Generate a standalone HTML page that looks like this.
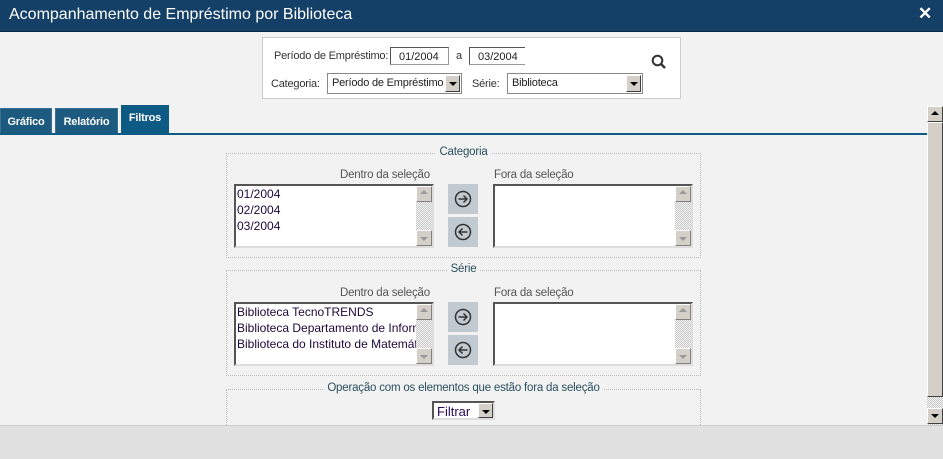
<!DOCTYPE html>
<html><head><meta charset="utf-8"><style>
*{box-sizing:border-box;margin:0;padding:0}
body{width:943px;height:459px;overflow:hidden;background:#f2f2f2;font-family:"Liberation Sans",sans-serif;position:relative}
.a{position:absolute}
.t{font-size:11px;color:#333;white-space:nowrap;letter-spacing:-0.2px}
.inp{background:#fff;border:1px solid #999;border-top-color:#555;border-left-color:#555;font-size:11px;color:#222;padding:3px 0 0 8px;white-space:nowrap;overflow:hidden}
.sel{background:#fff;border:1px solid #888;font-size:11px;color:#222;padding:3px 0 0 4px;white-space:nowrap;overflow:hidden;letter-spacing:-0.2px}
.dd{position:absolute;right:1px;top:1px;width:15px;bottom:1px;background:#d4d0c8;border:1px solid;border-color:#fff #404040 #404040 #fff}
.dd:after{content:"";position:absolute;left:3px;top:6px;border:4px solid transparent;border-top:4px solid #000;border-bottom:0}
.fs{position:absolute;border:1px dotted #bbb}
.lg{position:absolute;top:-8px;left:0;right:0;text-align:center;font-size:11.5px;color:#2a4f5e;white-space:nowrap;letter-spacing:-0.2px}
.lg span{background:#f2f2f2;padding:0 3px}
.lb{position:absolute;background:#fff;border:2px solid;border-color:#555 #ddd #ddd #555;font-size:12px;color:#1a0a3a;line-height:16px;padding-left:1px;overflow:hidden;white-space:nowrap}
.sb{position:absolute;right:0;top:0;bottom:0;width:16px;background:repeating-conic-gradient(#c8c8c8 0 25%,#f4f4f4 0 50%) 0 0/2px 2px}
.sbb{position:absolute;left:0;width:16px;height:16px;background:#d4d0c8;border:1px solid;border-color:#fff #808080 #808080 #fff}
.up:after,.dn:after{content:"";position:absolute;left:3px;border:4px solid transparent}
.up:after{top:3px;border-bottom:4px solid #999;border-top:0}
.dn:after{top:6px;border-top:4px solid #999;border-bottom:0}
.btn{position:absolute;width:30px;height:30px;background:#c1c9d1}
.tab{position:absolute;color:#fff;font-size:11px;font-weight:bold;text-align:center;background:#1d5a80;border:1px solid #3a7096;letter-spacing:-0.2px}
</style></head><body>
<div class="a" style="left:0;top:0;width:943px;height:32px;background:#143f66;border-bottom:1px solid #0a2a44"></div>
<div class="a" style="left:9px;top:6px;color:#fff;font-size:16px">Acompanhamento de Empréstimo por Biblioteca</div>
<div class="a" style="left:918px;top:4px;color:#fff;font-size:17px;font-weight:bold">✕</div>

<div class="a" style="left:262px;top:37px;width:419px;height:62px;background:#fff;border:1px solid #ccc"></div>
<div class="a t" style="left:274px;top:50px">Período de Empréstimo:</div>
<div class="a inp" style="left:390px;top:47px;width:59px;height:18px">01/2004</div>
<div class="a t" style="left:456px;top:50px">a</div>
<div class="a inp" style="left:469px;top:47px;width:56px;height:18px;border-right:0">03/2004</div>
<svg class="a" style="left:651px;top:54px" width="16" height="16" viewBox="0 0 16 16"><circle cx="6.5" cy="6.5" r="4.8" fill="none" stroke="#333" stroke-width="2"/><path d="M10 10l4 4" stroke="#333" stroke-width="2.4"/></svg>
<div class="a t" style="left:271px;top:78px">Categoria:</div>
<div class="a sel" style="left:327px;top:73px;width:135px;height:21px">Período de Empréstimo<div class="dd"></div></div>
<div class="a t" style="left:472px;top:78px">Série:</div>
<div class="a sel" style="left:507px;top:73px;width:136px;height:21px">Biblioteca<div class="dd"></div></div>

<div class="tab" style="left:0;top:108px;width:52px;height:26px;padding-top:7px">Gráfico</div>
<div class="tab" style="left:55px;top:108px;width:63px;height:26px;padding-top:7px">Relatório</div>
<div class="tab" style="left:121px;top:105px;width:48px;height:29px;padding-top:6px;background:#0d5a85;border-color:#0d5a85">Filtros</div>
<div class="a" style="left:0;top:133px;width:927px;height:2px;background:#0d5a85"></div>

<div class="a" style="left:927px;top:106px;width:16px;height:319px;background:repeating-conic-gradient(#c8c8c8 0 25%,#f4f4f4 0 50%) 0 0/2px 2px"></div>
<div class="sbb" style="left:927px;top:106px;border-color:#fff #404040 #404040 #fff"><div style="position:absolute;left:3px;top:4px;border:4px solid transparent;border-bottom:4px solid #000;border-top:0"></div></div>
<div class="a" style="left:927px;top:122px;width:16px;height:275px;background:#d4d0c8;border:1px solid;border-color:#fff #404040 #404040 #fff"></div>
<div class="sbb" style="left:927px;top:408px;border-color:#fff #404040 #404040 #fff"><div style="position:absolute;left:3px;top:5px;border:4px solid transparent;border-top:4px solid #000;border-bottom:0"></div></div>
<div class="a" style="left:0;top:425px;width:943px;height:34px;background:#e1e1e1;border-top:1px solid #ccc"></div>

<!-- Categoria -->
<div class="fs" style="left:226px;top:153px;width:475px;height:105px"><div class="lg"><span>Categoria</span></div></div>
<div class="a t" style="left:340px;top:169px;color:#555;font-size:11.5px">Dentro da seleção</div>
<div class="a t" style="left:494px;top:169px;color:#555;font-size:11.5px">Fora da seleção</div>
<div class="lb" style="left:234px;top:184px;width:200px;height:64px">01/2004<br>02/2004<br>03/2004<div class="sb"><div class="sbb up" style="top:0"></div><div class="sbb dn" style="bottom:0"></div></div></div>
<div class="lb" style="left:493px;top:184px;width:200px;height:64px"><div class="sb"><div class="sbb up" style="top:0"></div><div class="sbb dn" style="bottom:0"></div></div></div>
<div class="btn" style="left:448px;top:184px"><svg width="30" height="30"><circle cx="15" cy="15" r="7.5" fill="none" stroke="#333" stroke-width="1.5"/><path d="M10.5 15h8.5M15.5 11.5l3.5 3.5-3.5 3.5" fill="none" stroke="#333" stroke-width="1.5"/></svg></div>
<div class="btn" style="left:448px;top:217px"><svg width="30" height="30"><circle cx="15" cy="15" r="7.5" fill="none" stroke="#333" stroke-width="1.5"/><path d="M19.5 15h-8.5M14.5 11.5l-3.5 3.5 3.5 3.5" fill="none" stroke="#333" stroke-width="1.5"/></svg></div>

<!-- Série -->
<div class="fs" style="left:226px;top:270px;width:475px;height:106px"><div class="lg"><span>Série</span></div></div>
<div class="a t" style="left:340px;top:287px;color:#555;font-size:11.5px">Dentro da seleção</div>
<div class="a t" style="left:494px;top:287px;color:#555;font-size:11.5px">Fora da seleção</div>
<div class="lb" style="left:234px;top:302px;width:200px;height:64px">Biblioteca TecnoTRENDS<br>Biblioteca Departamento de Informática<br>Biblioteca do Instituto de Matemática<div class="sb"><div class="sbb up" style="top:0"></div><div class="sbb dn" style="bottom:0"></div></div></div>
<div class="lb" style="left:493px;top:302px;width:200px;height:64px"><div class="sb"><div class="sbb up" style="top:0"></div><div class="sbb dn" style="bottom:0"></div></div></div>
<div class="btn" style="left:448px;top:302px"><svg width="30" height="30"><circle cx="15" cy="15" r="7.5" fill="none" stroke="#333" stroke-width="1.5"/><path d="M10.5 15h8.5M15.5 11.5l3.5 3.5-3.5 3.5" fill="none" stroke="#333" stroke-width="1.5"/></svg></div>
<div class="btn" style="left:448px;top:335px"><svg width="30" height="30"><circle cx="15" cy="15" r="7.5" fill="none" stroke="#333" stroke-width="1.5"/><path d="M19.5 15h-8.5M14.5 11.5l-3.5 3.5 3.5 3.5" fill="none" stroke="#333" stroke-width="1.5"/></svg></div>

<!-- Operação -->
<div class="fs" style="left:226px;top:389px;width:475px;height:36px;border-bottom:0"><div class="lg"><span>Operação com os elementos que estão fora da seleção</span></div></div>
<div class="a" style="left:432px;top:401px;width:63px;height:19px;background:#fff;border:2px solid;border-color:#555 #ddd #ddd #555;font-size:13px;color:#2a0a5a;padding:1px 0 0 3px">Filtrar<div class="dd" style="right:0;top:0;bottom:0"></div></div>
</body></html>
